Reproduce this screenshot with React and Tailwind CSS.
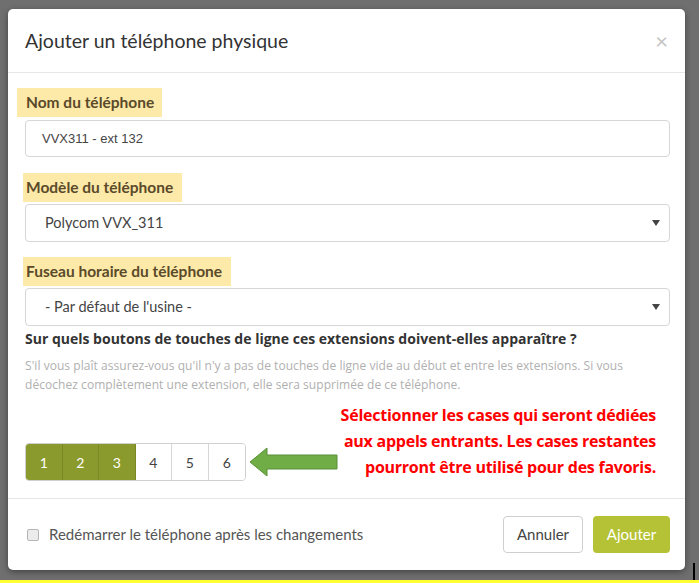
import React from "react";

const font = { fontFamily: "Lato, 'Noto Sans', sans-serif" };
const open = { fontFamily: "'Open Sans', Lato, sans-serif" };

function Label({ children, first }) {
  return (
    <div className={first ? "-ml-2 flex" : "-ml-[2px] flex"}>
      <div className={"bg-[#fde9a8] h-[29px] flex items-center text-[15.5px] font-bold text-[#5a4a2a] " + (first ? "pl-[9px] pr-[8px]" : "pl-[3px] pr-[9px]")}>
        {children}
      </div>
    </div>
  );
}

function Select({ children }) {
  return (
    <div className="h-[38px] border border-[#d6d6d6] rounded-[4px] flex items-center justify-between pl-[19px] pr-[9px] text-[14.5px] text-[#444]">
      <span>{children}</span>
      <svg width="8" height="6" viewBox="0 0 8 6"><path d="M0 0h8L4 6z" fill="#444" /></svg>
    </div>
  );
}

export default function App() {
  return (
    <div className="w-[699px] h-[583px] bg-[#6f6f6f] relative overflow-hidden" style={font}>
      <div className="pl-[8px] pt-[9px]">
        <div className="w-[677px] h-[561px] bg-white rounded-[5px] shadow-[0_2px_6px_rgba(0,0,0,0.4)] flex flex-col">
          <div className="h-[64px] border-b border-[#e6e6e6] flex items-center justify-between pl-[17px] pr-[17px] shrink-0">
            <span className="text-[19.5px] text-[#333]">Ajouter un téléphone physique</span>
            <span className="text-[22px] text-[#c4c4c4] leading-none">×</span>
          </div>
          <div className="pl-[17px] pr-[15px] pt-[15px] flex flex-col">
            <Label first>Nom du téléphone</Label>
            <div className="mt-[3px] h-[37px] border border-[#d6d6d6] rounded-[4px] flex items-center pl-[16px] text-[13px] text-[#444]" style={{ fontFamily: "'Liberation Sans', Arial, sans-serif" }}>
              VVX311 - ext 132
            </div>
            <div className="mt-[16px]"><Label>Modèle du téléphone</Label></div>
            <div className="mt-[2px]"><Select>Polycom VVX_311</Select></div>
            <div className="mt-[15px]"><Label>Fuseau horaire du téléphone</Label></div>
            <div className="mt-[2px]"><Select>- Par défaut de l'usine -</Select></div>
            <div className="mt-[3px] text-[14px] font-bold text-[#333] leading-[19px]" style={open}>
              Sur quels boutons de touches de ligne ces extensions doivent-elles apparaître ?
            </div>
            <div className="mt-[8px] text-[12px] text-[#b0b0b0] leading-[19px] pr-[30px] tracking-[0.05px]" style={open}>
              S'il vous plaît assurez-vous qu'il n'y a pas de touches de ligne vide au début et entre les extensions. Si vous décochez complètement une extension, elle sera supprimée de ce téléphone.
            </div>
            <div className="flex items-end justify-between mt-[8px]">
              <div className="flex items-center shrink-0">
                <div className="flex h-[38px] border border-[#d0d0d0] rounded-[4px] overflow-hidden text-[14px]">
                  {[1, 2, 3, 4, 5, 6].map((n) => (
                    <div
                      key={n}
                      className={
                        "w-[36.5px] flex items-center justify-center " +
                        (n <= 3
                          ? "bg-[#8b9a2c] text-white border-r border-[#7a8826]"
                          : "bg-white text-[#444] " + (n < 6 ? "border-r border-[#d6d6d6]" : ""))
                      }
                    >
                      {n}
                    </div>
                  ))}
                </div>
                <svg width="92" height="32" viewBox="0 0 92 32" className="ml-[2px]">
                  <path d="M2 16 L19 2 L19 9 L89 9 L89 23 L19 23 L19 30 Z" fill="#70ad47" stroke="#5a8f37" strokeWidth="1" />
                </svg>
              </div>
              <div className="whitespace-nowrap shrink-0 text-right text-[16px] font-bold text-[#ff0000] leading-[26px] mr-[14px] mb-[1px] tracking-[-0.25px]" style={open}>
                <div>Sélectionner les cases qui seront dédiées</div>
                <div>aux appels entrants. Les cases restantes</div>
                <div>pourront être utilisé pour des favoris.</div>
              </div>
            </div>
          </div>
          <div className="mt-auto h-[72px] border-t border-[#e6e6e6] flex items-center justify-between pl-[19px] pr-[15px]">
            <div className="flex items-center">
              <div className="w-[12px] h-[12px] border border-[#b5b5b5] rounded-[2px] bg-[#ececec]" />
              <span className="ml-[10px] text-[15px] text-[#555]">Redémarrer le téléphone après les changements</span>
            </div>
            <div className="flex items-center gap-[10px]">
              <div className="w-[80px] h-[37px] border border-[#cfcfcf] rounded-[4px] flex items-center justify-center text-[15px] text-[#444]">Annuler</div>
              <div className="w-[77px] h-[37px] bg-[#b5c236] rounded-[4px] flex items-center justify-center text-[15px] text-white">Ajouter</div>
            </div>
          </div>
        </div>
      </div>
      <div className="absolute left-0 bottom-0 w-full h-[3px] bg-[#ffff33]" />
      <div className="absolute left-[693px] top-[563px] w-[2px] h-[17px] bg-black" />
    </div>
  );
}
